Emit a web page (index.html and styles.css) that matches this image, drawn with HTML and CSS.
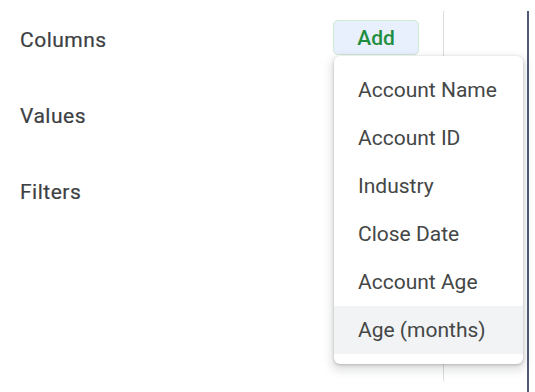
FILE: index.html
```html
<!DOCTYPE html>
<html>
<head>
<meta charset="utf-8">
<link rel="stylesheet" href="styles.css">
</head>
<body>
<div class="panel">
  <div class="main">
    <div class="row">
      <span class="label">Columns</span>
      <button class="add">Add</button>
    </div>
    <div class="row">
      <span class="label">Values</span>
    </div>
    <div class="row">
      <span class="label">Filters</span>
    </div>
  </div>
  <div class="gap"></div>
  <div class="rail"></div>
</div>
<ul class="menu">
  <li class="item">Account Name</li>
  <li class="item">Account ID</li>
  <li class="item">Industry</li>
  <li class="item">Close Date</li>
  <li class="item">Account Age</li>
  <li class="item active">Age (months)</li>
</ul>
</body>
</html>
```
FILE: styles.css
```css
html, body {
  margin: 0;
  padding: 0;
  background: #ffffff;
  font-family: Roboto, "Liberation Sans", sans-serif;
  overflow: hidden;
}

.panel {
  display: flex;
  padding-top: 11px;
  height: 392px;
  box-sizing: border-box;
}

.main {
  box-sizing: border-box;
  width: 444px;
  height: 370px;
  border-right: 1px solid #dadce0;
  padding: 9px 24px 0 20px;
}

.row {
  display: flex;
  justify-content: space-between;
  align-items: flex-start;
  height: 76px;
}

.label {
  font-size: 21px;
  font-weight: 400;
  letter-spacing: 0.5px;
  color: #3c4043;
  line-height: 35px;
  padding-top: 3px;
  -webkit-text-stroke: 0.2px #3c4043;
}

.add {
  box-sizing: border-box;
  width: 86px;
  height: 35px;
  border: 1px solid #ceead6;
  border-radius: 5px;
  background: #e8f0fe;
  color: #1e8e3e;
  font-family: Roboto, "Liberation Sans", sans-serif;
  font-size: 21px;
  font-weight: 500;
  padding: 0;
}

.gap {
  width: 83px;
}

.rail {
  width: 2px;
  height: 381px;
  background: #4f5b75;
}

.menu {
  position: absolute;
  left: 334px;
  top: 56px;
  width: 189px;
  margin: 0;
  padding: 10px 0;
  list-style: none;
  background: #ffffff;
  border-radius: 6px;
  box-shadow: 0 1px 3px rgba(60, 64, 67, 0.3), 0 4px 8px 3px rgba(60, 64, 67, 0.15);
}

.item {
  height: 48px;
  line-height: 48px;
  padding-left: 24px;
  font-size: 21px;
  color: #444746;
}

.item.active {
  background: #f1f3f4;
}
```
